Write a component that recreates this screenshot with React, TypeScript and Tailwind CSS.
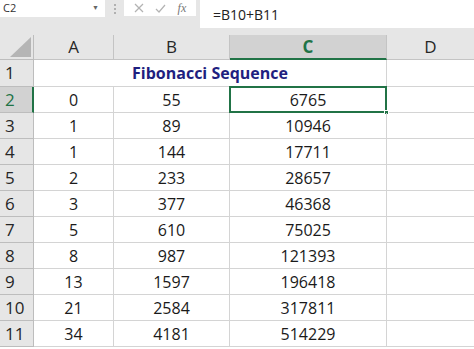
import React from 'react';

const fib = [
  [0, 55, 6765],
  [1, 89, 10946],
  [1, 144, 17711],
  [2, 233, 28657],
  [3, 377, 46368],
  [5, 610, 75025],
  [8, 987, 121393],
  [13, 1597, 196418],
  [21, 2584, 317811],
  [34, 4181, 514229],
];

const font = { fontFamily: '"Open Sans", "Liberation Sans", sans-serif' };

const FormulaBar = () => (
  <div className="h-[35px] bg-[#e6e6e6] flex items-start shrink-0">
    {/* name box */}
    <div className="w-[105px] h-[17px] bg-white flex items-center justify-between pl-[3px] pr-[6px] text-[11px] text-[#333]">
      <span>C2</span>
      <span className="text-[7px] text-[#666]">▼</span>
    </div>
    <div className="w-[19px] h-[17px] flex flex-col items-center justify-center gap-[2px]">
      <span className="w-[2px] h-[2px] bg-[#b0b0b0]" />
      <span className="w-[2px] h-[2px] bg-[#b0b0b0]" />
      <span className="w-[2px] h-[2px] bg-[#b0b0b0]" />
    </div>
    {/* fx buttons */}
    <div className="w-[72px] h-[16px] bg-white flex items-center justify-around px-[4px] text-[#a6a6a6]">
      <svg width="10" height="10" viewBox="0 0 10 10" fill="none" stroke="#b3b3b3" strokeWidth="1.2">
        <line x1="1" y1="1" x2="9" y2="9" />
        <line x1="9" y1="1" x2="1" y2="9" />
      </svg>
      <svg width="11" height="9" viewBox="0 0 11 9" fill="none" stroke="#b3b3b3" strokeWidth="1.2">
        <polyline points="1,5 4,8 10,1" />
      </svg>
      <span className="italic text-[12px] text-[#777]" style={{ fontFamily: '"Liberation Serif", serif' }}>
        fx
      </span>
    </div>
    <div className="w-[4px]" />
    {/* formula input */}
    <div className="flex-1 h-[28px] bg-white flex items-center pl-[13px] text-[14px] text-[#222]">
      =B10+B11
    </div>
  </div>
);

const App = () => {
  return (
    <div className="w-[474px] h-[349px] overflow-hidden bg-white flex flex-col" style={font}>
      <FormulaBar />
      <div className="grid grid-cols-[34px_80px_116px_157px_1fr] grid-rows-[25px_27px_repeat(10,26px)] text-[16px] text-[#1a1a1a]">
        {/* header row */}
        <div className="bg-[#e6e6e6] border-r border-b border-[#bdbdbd] relative overflow-hidden">
          <div className="absolute right-[2px] bottom-[2px] w-0 h-0 border-l-[21px] border-l-transparent border-b-[20px] border-b-[#b5b5b5]" />
        </div>
        <div className="bg-[#e6e6e6] border-r border-b border-[#c4c4c4] flex items-center justify-center text-[17px] text-[#262626]">A</div>
        <div className="bg-[#e6e6e6] border-r border-b border-[#c4c4c4] flex items-center justify-center text-[17px] text-[#262626]">B</div>
        <div className="bg-[#d2d2d2] border-r border-[#c4c4c4] border-b-2 border-b-[#217346] flex items-center justify-center text-[17px] text-[#217346] font-bold">C</div>
        <div className="bg-[#e6e6e6] border-b border-[#c4c4c4] flex items-center justify-center text-[17px] text-[#262626]">D</div>

        {/* row 1 */}
        <div className="bg-[#e6e6e6] border-r border-b border-[#bdbdbd] flex items-center pl-[5px] text-[17px] text-[#262626]">1</div>
        <div className="col-span-3 border-r border-b border-[#d4d4d4] flex items-center justify-center font-bold text-[#1f1f80]">
          Fibonacci Sequence
        </div>
        <div className="border-b border-[#d4d4d4]" />

        {fib.map((r, i) => {
          const row = i + 2;
          const sel = row === 2;
          return (
            <React.Fragment key={row}>
              <div
                className={
                  sel
                    ? 'bg-[#d2d2d2] border-r-2 border-r-[#217346] border-b border-b-[#bdbdbd] flex items-center pl-[5px] text-[17px] text-[#217346]'
                    : 'bg-[#e6e6e6] border-r border-b border-[#bdbdbd] flex items-center pl-[5px] text-[17px] text-[#262626]'
                }
              >
                {row}
              </div>
              <div className="border-r border-b border-[#d4d4d4] flex items-center justify-center">{r[0]}</div>
              <div className="border-r border-b border-[#d4d4d4] flex items-center justify-center">{r[1]}</div>
              <div className="border-r border-b border-[#d4d4d4] flex items-center justify-center relative">
                {r[2]}
                {sel && (
                  <div className="absolute -left-[1px] -top-[1px] -right-[1px] -bottom-[1px] border-2 border-[#217346]">
                    <div className="absolute -right-[4px] -bottom-[4px] w-[5px] h-[5px] bg-[#217346] border border-white" />
                  </div>
                )}
              </div>
              <div className="border-b border-[#d4d4d4]" />
            </React.Fragment>
          );
        })}
      </div>
    </div>
  );
};

export default App;
